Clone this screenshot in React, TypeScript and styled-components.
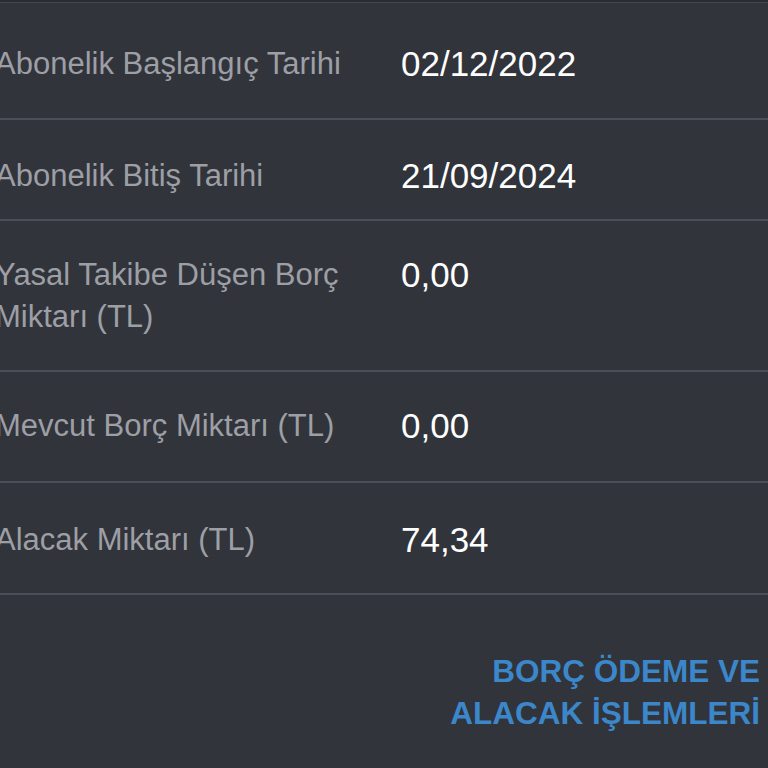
import React from 'react';
import styled, { createGlobalStyle } from 'styled-components';

const GlobalStyle = createGlobalStyle`
    html, body {
        margin: 0;
        padding: 0;
        background-color: #31343b;
    }
    body {
        min-height: 100vh;
        overflow: hidden;
        font-family: "Liberation Sans", Arial, Helvetica, sans-serif;
        -webkit-font-smoothing: antialiased;
    }
`;

const Page = styled.div`
    display: flex;
    flex-direction: column;
    width: 768px;
    min-height: 768px;
    background-color: #31343b;
`;

const TopEdge = styled.div`
    height: 2px;
    background-color: #2a2c31;
    border-bottom: 1px solid #454850;
`;

const DetailList = styled.div`
    display: flex;
    flex-direction: column;
`;

const Row = styled.div<{ $top: number; $bottom: number }>`
    display: grid;
    grid-template-columns: 381px 1fr;
    column-gap: 25px;
    align-items: start;
    margin-left: -5px;
    padding: ${p => p.$top}px 0 ${p => p.$bottom}px;
    border-bottom: 2px solid #4b4e56;
`;

const Label = styled.div`
    font-size: 31px;
    line-height: 42px;
    color: #9d9fa5;
`;

const Value = styled.div`
    font-size: 35px;
    line-height: 42px;
    color: #ffffff;
`;

const ActionArea = styled.div`
    display: flex;
    justify-content: flex-end;
    padding: 55px 8px 0 0;
`;

const ActionLink = styled.a`
    font-size: 31.5px;
    line-height: 42px;
    font-weight: bold;
    color: #3c87c9;
    text-align: right;
    text-decoration: none;
    cursor: pointer;
`;

const rows = [
    { label: 'Abonelik Başlangıç Tarihi', value: '02/12/2022', top: 40, bottom: 33 },
    { label: 'Abonelik Bitiş Tarihi', value: '21/09/2024', top: 35, bottom: 22 },
    { label: 'Yasal Takibe Düşen Borç Miktarı (TL)', value: '0,00', top: 33, bottom: 32 },
    { label: 'Mevcut Borç Miktarı (TL)', value: '0,00', top: 33, bottom: 34 },
    { label: 'Alacak Miktarı (TL)', value: '74,34', top: 36, bottom: 32 },
];

const App: React.FC = () => {
    return (
        <>
            <GlobalStyle />
            <Page>
                <TopEdge />
                <DetailList>
                    {rows.map(row => (
                        <Row key={row.label} $top={row.top} $bottom={row.bottom}>
                            <Label>{row.label}</Label>
                            <Value>{row.value}</Value>
                        </Row>
                    ))}
                </DetailList>
                <ActionArea>
                    <ActionLink>
                        BORÇ ÖDEME VE
                        <br />
                        ALACAK İŞLEMLERİ
                    </ActionLink>
                </ActionArea>
            </Page>
        </>
    );
};

export default App;
